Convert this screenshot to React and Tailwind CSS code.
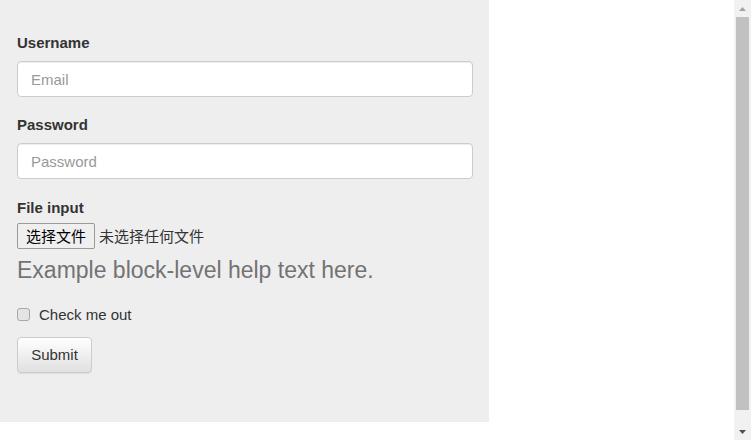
import React from "react";

function FakeScrollbar() {
  // page is a little taller than the window, so the classic bar shows on the right
  return (
    <div className="fixed top-0 right-0 w-[17px] h-[440px] bg-[#f1f1f1] flex flex-col">
      <div className="h-[17px] flex items-center justify-center">
        <svg width="7" height="4" viewBox="0 0 7 4">
          <polygon points="3.5,0 7,4 0,4" fill="#a3a3a3" />
        </svg>
      </div>
      <div className="h-[393px] mx-[2px] bg-[#c1c1c1]" />
      <div className="flex-1" />
      <div className="h-[17px] flex items-center justify-center">
        <svg width="7" height="4" viewBox="0 0 7 4">
          <polygon points="0,0 7,0 3.5,4" fill="#505050" />
        </svg>
      </div>
    </div>
  );
}

export default function App() {
  return (
    <div className="min-h-[454px] bg-white font-['Liberation_Sans',Arial,sans-serif] text-[15px] text-[#333]">
      <div className="w-[489px] h-[422px] bg-[#eee] pl-[17px] pr-[16px] pt-[32px]">
        <form onSubmit={(e) => e.preventDefault()}>
          <div className="mb-[17px]">
            <label className="block font-bold leading-[21px] mb-[8px]">Username</label>
            <input
              type="email"
              placeholder="Email"
              className="block w-full h-[36px] px-[13px] bg-white border border-[#ccc] rounded-[4px] shadow-[inset_0_1px_1px_rgba(0,0,0,0.075)] text-[15px] text-[#555] placeholder:text-[#999] outline-none"
            />
          </div>
          <div className="mb-[18px]">
            <label className="block font-bold leading-[21px] mb-[8px]">Password</label>
            <input
              type="password"
              placeholder="Password"
              className="block w-full h-[36px] px-[13px] bg-white border border-[#ccc] rounded-[4px] shadow-[inset_0_1px_1px_rgba(0,0,0,0.075)] text-[15px] text-[#555] placeholder:text-[#999] outline-none"
            />
          </div>
          <div>
            <label className="block font-bold leading-[21px] mb-[5px]">File input</label>
            <div className="flex items-center h-[26px] font-['Noto_Sans_CJK_SC',sans-serif]">
              <span className="flex items-center h-[26px] px-[8px] bg-[#efefef] border border-[#9a9a9a] rounded-[2px] text-black leading-[20px]">
                选择文件
              </span>
              <span className="ml-[4px] leading-[20px] text-[#333]">未选择任何文件</span>
            </div>
            <p className="mt-[9px] text-[23px] leading-[25px] text-[#737373]">Example block-level help text here.</p>
          </div>
          <label className="mt-[21px] flex items-center h-[21px] leading-[21px]">
            <span className="w-[13px] h-[13px] border border-[#a8a8a8] rounded-[3px] bg-[#e4e4e4]" />
            <span className="ml-[9px]">Check me out</span>
          </label>
          <button
            type="submit"
            className="mt-[12px] block w-[75px] h-[36px] border border-[#ccc] rounded-[4px] bg-gradient-to-b from-white to-[#e0e0e0] shadow-[0_1px_1px_rgba(0,0,0,0.075)] text-[#333]"
          >
            Submit
          </button>
        </form>
      </div>
      <FakeScrollbar />
    </div>
  );
}
